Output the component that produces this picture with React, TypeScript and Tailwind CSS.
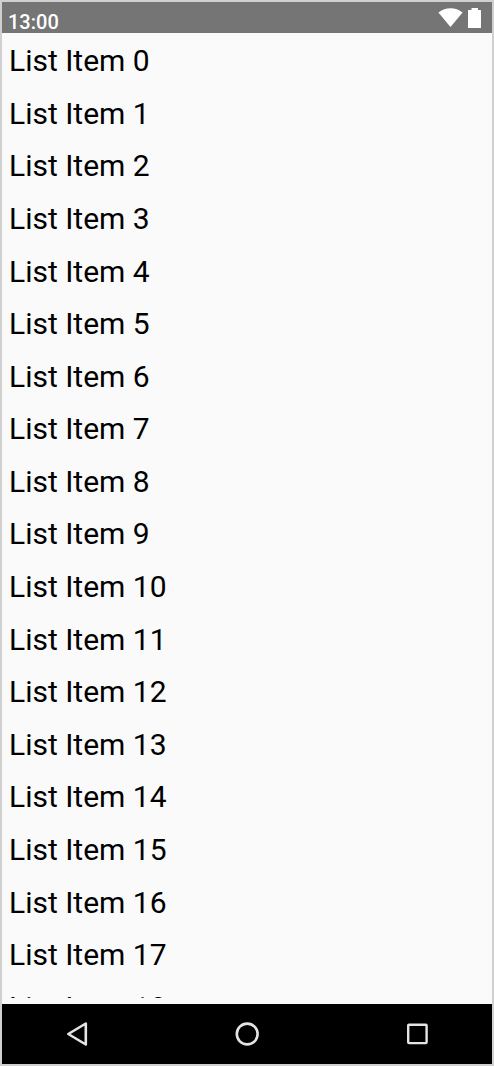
const items = Array.from({ length: 19 }, (_, i) => `List Item ${i}`)

const StatusBar: React.FC = () => {
    return (
        <header className="flex h-[31px] shrink-0 items-start justify-between bg-[#757575] pl-1.5 pr-2.5 text-white">
            <time className="pt-2 text-[20px] font-medium leading-6">13:00</time>
            <div className="flex gap-1 pt-1.5">
                <svg className="h-5 w-[26px]" viewBox="0 0 26 20" fill="currentColor" aria-label="Wi-Fi">
                    <path d="M0.4 4.600C3.800 1.600 8.200 0.200 12.500 0.200s8.700 1.400 12.100 4.400L12.500 19z" />
                </svg>
                <svg className="h-5 w-[14px]" viewBox="0 0 14 20" fill="currentColor" aria-label="Battery">
                    <path d="M3.500 2v-2h6.500v2h2.500q0.500 0 0.500 0.500v17q0 0.500-0.500 0.500h-12q-0.500 0-0.500-0.500v-17q0-0.500 0.500-0.500h3z" />
                </svg>
            </div>
        </header>
    )
}

const NavigationBar: React.FC = () => {
    return (
        <nav className="flex h-[60px] shrink-0 items-center justify-between bg-black px-[60px] text-[#e4e4e4]">
            <button type="button" aria-label="Back">
                <svg className="h-[30px] w-[30px]" viewBox="0 0 30 30" fill="none" stroke="currentColor" strokeWidth="2.6" strokeLinejoin="round">
                    <path d="M6.300 15L23.800 4.500v21z" />
                </svg>
            </button>
            <button type="button" aria-label="Home">
                <svg className="h-[30px] w-[30px]" viewBox="0 0 30 30" fill="none" stroke="currentColor" strokeWidth="2.6">
                    <circle cx="15.200" cy="15" r="10.400" />
                </svg>
            </button>
            <button type="button" aria-label="Overview">
                <svg className="h-[30px] w-[30px]" viewBox="0 0 30 30" fill="none" stroke="currentColor" strokeWidth="2.400">
                    <rect x="6.200" y="5.700" width="18.400" height="18.400" rx="0.800" />
                </svg>
            </button>
        </nav>
    )
}

const App: React.FC = () => {
    return (
        <div className="flex h-screen flex-col border-2 border-[#d0d0d0] bg-[#fafafa] font-['Roboto',sans-serif]">
            <StatusBar />
            <main className="mb-1.5 min-h-0 flex-1 overflow-hidden pt-0.5">
                {/* rows share the list height evenly */}
                <ul className="flex h-[999px] flex-col px-[7px] text-[30px] leading-9 text-black">
                    {items.map((item) => (
                        <li key={item} className="flex flex-1 items-center">{item}</li>
                    ))}
                </ul>
            </main>
            <NavigationBar />
        </div>
    )
}

export default App
